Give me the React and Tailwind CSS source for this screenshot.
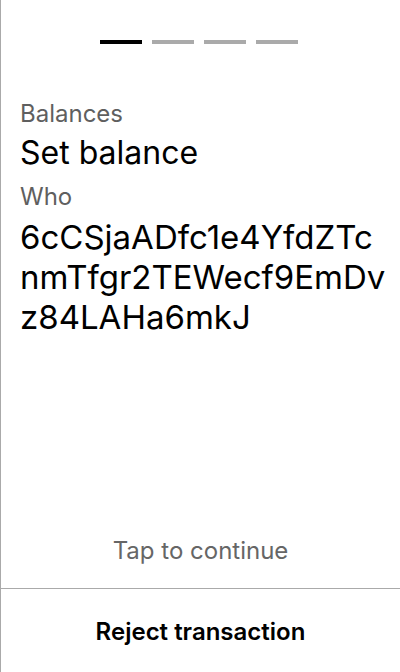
export default function App() {
  return (
    <div className="h-[672px] w-[400px] flex flex-col border-l border-[#aaaaaa] bg-white text-black" style={{ fontFamily: 'Inter, "Noto Sans", sans-serif' }}>
      <div className="flex-1 flex flex-col">
        <div className="flex justify-center gap-[10px] pt-[40px] pr-[3px]">
          <div className="h-[4px] w-[42px] bg-black" />
          <div className="h-[4px] w-[42px] bg-[#aaaaaa]" />
          <div className="h-[4px] w-[42px] bg-[#aaaaaa]" />
          <div className="h-[4px] w-[42px] bg-[#aaaaaa]" />
        </div>
        <div className="pl-[19px] pr-[14px] pt-[56px]">
          <div className="text-[24px] leading-[28px] text-[#5f5f5f]">Balances</div>
          <div className="text-[32px] leading-[40px] mt-[5px]">Set balance</div>
          <div className="text-[24px] leading-[28px] text-[#5f5f5f] mt-[10px]">Who</div>
          <div className="text-[33px] leading-[40px] break-all mt-[6px]">6cCSjaADfc1e4YfdZTcnmTfgr2TEWecf9EmDvz84LAHa6mkJ</div>
        </div>
        <div className="mt-auto pb-[23px] text-center text-[24px] leading-[28px] text-[#666666]">Tap to continue</div>
      </div>
      <div className="h-[84px] border-t border-[#aaaaaa] flex items-center justify-center">
        <div className="text-[24px] leading-[28px] font-semibold pt-[3px]">Reject transaction</div>
      </div>
    </div>
  );
}
